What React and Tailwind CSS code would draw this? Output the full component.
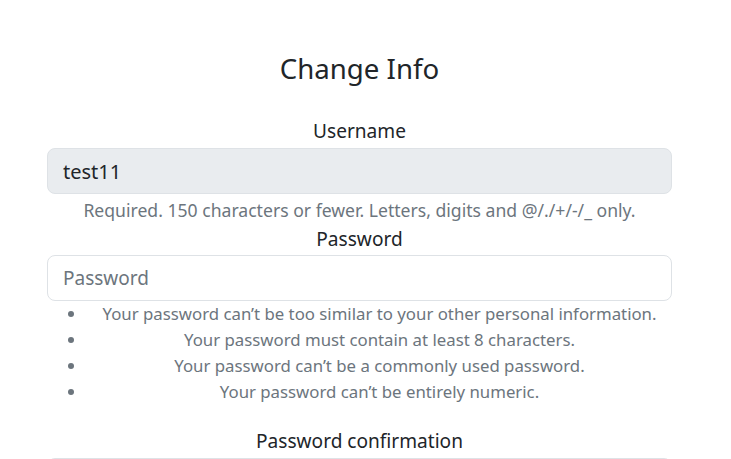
export default function App() {
  const rules = [
    "Your password can’t be too similar to your other personal information.",
    "Your password must contain at least 8 characters.",
    "Your password can’t be a commonly used password.",
    "Your password can’t be entirely numeric.",
  ];

  return (
    <div className="min-h-screen bg-white text-[#212529]" style={{ fontFamily: '"Noto Sans", sans-serif' }}>
      <div className="w-[625px] ml-[47px] pt-[51px] text-center">
        <h2 className="text-[27.6px] leading-[34px] font-normal mb-[31px]">Change Info</h2>

        <label className="block text-[19.1px] leading-[30px] mb-[2px]">Username</label>
        <input
          disabled
          value="test11"
          readOnly
          className="block w-full h-[46px] px-[15px] text-[20px] text-[#212529] bg-[#e9ecef] border border-[#dee2e6] rounded-[8px]"
        />
        <div className="mt-[4px] text-[17.6px] leading-[24px] text-[#6c757d]">
          Required. 150 characters or fewer. Letters, digits and @/./+/-/_ only.
        </div>

        <label className="block mt-[2px] text-[19.1px] leading-[30px] mb-[1px]">Password</label>
        <input
          type="password"
          placeholder="Password"
          className="block w-full h-[46px] px-[15px] text-[19px] bg-white border border-[#dee2e6] rounded-[8px] placeholder:text-[#6c757d]"
        />
        <ul className="list-disc pl-[40px] text-[16.8px] leading-[26px] text-[#6c757d] mb-[21px]">
          {rules.map((r) => (
            <li key={r} className="text-center">{r}</li>
          ))}
        </ul>

        <label className="block text-[19.1px] leading-[30px] mb-[2px]">Password confirmation</label>
        <input
          type="password"
          placeholder="Password confirmation"
          className="block w-full h-[46px] px-[15px] text-[19px] bg-white border border-[#dee2e6] rounded-[8px] placeholder:text-[#6c757d]"
        />
      </div>
    </div>
  );
}
